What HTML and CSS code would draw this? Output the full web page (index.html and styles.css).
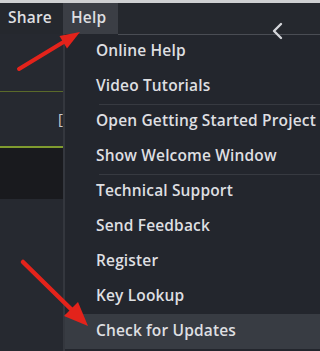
FILE: index.html
```html
<!DOCTYPE html>
<html>
<head>
<meta charset="utf-8">
<link rel="stylesheet" href="styles.css">
</head>
<body>
<div class="topstrip"></div>
<div class="menubar">
  <div class="mb-item">Share</div>
  <div class="mb-item active">Help</div>
  <div class="mb-rest"></div>
</div>
<div class="main">
  <div class="leftpanel">
    <div class="lp-top"></div>
    <div class="lp-mid"><span class="bracket">[</span></div>
    <div class="lp-dark"></div>
  </div>
  <ul class="menu">
    <li class="item">Online Help</li>
    <li class="item">Video Tutorials</li>
    <li class="item sep">Open Getting Started Project</li>
    <li class="item">Show Welcome Window</li>
    <li class="item sep">Technical Support</li>
    <li class="item">Send Feedback</li>
    <li class="item">Register</li>
    <li class="item">Key Lookup</li>
    <li class="item hover">Check for Updates</li>
  </ul>
</div>
<svg class="chevron" width="14" height="18" viewBox="0 0 14 18"><path d="M10 2 L3 9 L10 16" fill="none" stroke="#d4d6da" stroke-width="2.4" stroke-linecap="round" stroke-linejoin="round"/></svg>
<svg class="arrows" width="320" height="351" viewBox="0 0 320 351">
  <line x1="19" y1="69" x2="66" y2="40.5" stroke="#e3231b" stroke-width="4" stroke-linecap="round"/>
  <polygon points="80,32 59.5,36 67,48.5" fill="#e3231b"/>
  <line x1="23" y1="262" x2="74" y2="312" stroke="#e3231b" stroke-width="4.5" stroke-linecap="round"/>
  <polygon points="88,326 64,316 78,302" fill="#e3231b"/>
</svg>
</body>
</html>
```
FILE: styles.css
```css
* { box-sizing: border-box; }
html, body { margin: 0; padding: 0; }
body {
  width: 320px;
  height: 351px;
  overflow: hidden;
  background: #262930;
  font-family: "Open Sans", "Liberation Sans", sans-serif;
  font-weight: 600;
  color: #dedfe1;
  position: relative;
}
.topstrip { height: 3px; background: #cfd0d2; }
.menubar {
  display: flex;
  height: 31px;
  background: #25282e;
}
.mb-item {
  font-size: 15.5px;
  letter-spacing: 0.2px;
  line-height: 29px;
  padding: 0 8px;
  width: 63px;
}
.mb-item.active {
  width: 55px;
  background: #3b3e45;
  padding-left: 8px;
}
.mb-rest { flex: 1; }
.main {
  display: flex;
  height: 317px;
}
.leftpanel {
  width: 63px;
  display: flex;
  flex-direction: column;
}
.lp-top {
  height: 58px;
  border-bottom: 1px solid #5a6a2a;
}
.lp-mid {
  height: 56px;
  border-bottom: 2px solid #7f9b2f;
  position: relative;
}
.bracket {
  position: absolute;
  right: 0;
  top: 17px;
  font-size: 15px;
  line-height: 18px;
  font-weight: 400;
  color: #c8c9cc;
}
.lp-dark {
  height: 51px;
  background: #191a1e;
}
.menu {
  flex: 1;
  list-style: none;
  margin: 0;
  padding: 0;
  background: #23262d;
  border-left: 2px solid #34373e;
  position: relative;
}
.menu::before {
  content: "";
  position: absolute;
  left: 53px;
  right: 0;
  top: 0;
  height: 1px;
  background: #4a4d54;
}
.item {
  height: 35px;
  line-height: 33px;
  padding-left: 31px;
  font-size: 15.5px;
  letter-spacing: 0.15px;
  white-space: nowrap;
  position: relative;
}
.item.sep::before {
  content: "";
  position: absolute;
  left: 34px;
  right: 0;
  top: 0;
  height: 1px;
  background: #373a41;
}
.item.hover { background: #383c43; }
.chevron {
  position: absolute;
  left: 271px;
  top: 22px;
}
.arrows {
  position: absolute;
  left: 0;
  top: 0;
}
```
